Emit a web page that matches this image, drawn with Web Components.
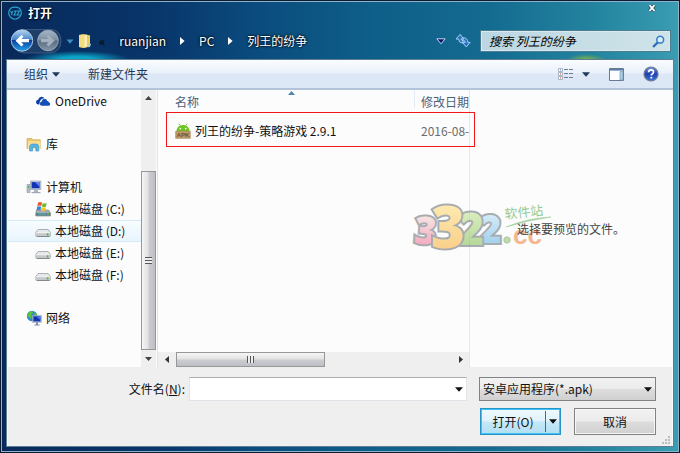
<!DOCTYPE html>
<html lang="zh-CN">
<head>
<meta charset="utf-8">
<title>打开</title>
<style>
    body {
        margin: 0;
        font: 12px/16px "Noto Sans CJK SC", "Open Sans", sans-serif;
        color: #111;
    }
</style>
</head>
<body>

<open-dialog>
    <title-bar slot="title">打开</title-bar>
    <address-bar slot="address" search="搜索 列王的纷争"></address-bar>
    <tool-bar slot="tools"></tool-bar>
    <nav-pane slot="nav">
        <nav-item icon="onedrive" level="2">OneDrive</nav-item>
        <nav-item icon="library" root>库</nav-item>
        <nav-item icon="computer" root>计算机</nav-item>
        <nav-item icon="system" level="2">本地磁盘 (C:)</nav-item>
        <nav-item icon="drive" level="2" hot>本地磁盘 (D:)</nav-item>
        <nav-item icon="drive" level="2">本地磁盘 (E:)</nav-item>
        <nav-item icon="drive" level="2">本地磁盘 (F:)</nav-item>
        <nav-item icon="network" root>网络</nav-item>
    </nav-pane>
    <file-list slot="files"></file-list>
    <preview-pane slot="preview">选择要预览的文件。</preview-pane>
    <dialog-footer slot="footer"></dialog-footer>
</open-dialog>

<script>

const icons = {
    app: `<svg width="14" height="14" viewBox="0 0 14 14" fill="none" stroke="#2aa5cf" stroke-width="1.1">
            <path d="M3 2Q7 .2 11 2Q13.6 4 13.2 8Q12 12.5 7 13.2Q2 12.5 .8 8Q.4 4 3 2Z"/>
            <path d="M2.5 5l1.3 2L5 5M3.8 7v2.3M5.8 5h2.4L6 9h2.3M9 5h2.4L9.2 9h2.6"/></svg>`,
    close: `<svg width="8" height="8" viewBox="0 0 8 8"><path d="M1.5 1.2l5 5.6M6.5 1.2l-5 5.6" stroke="#26394a" stroke-width="3.2"/>
            <path d="M1.5 1.2l5 5.6M6.5 1.2l-5 5.6" stroke="#fff" stroke-width="1.8"/></svg>`,
    travel: `<svg width="54" height="26" viewBox="0 0 54 26">
            <defs>
                <linearGradient id="b" x2="0" y2="1"><stop stop-color="#b9d6ef"/><stop offset=".46" stop-color="#4585ca"/><stop offset=".5" stop-color="#0b3f9c"/><stop offset="1" stop-color="#25a5ee"/></linearGradient>
                <linearGradient id="g" x2="0" y2="1"><stop stop-color="#a7b6c6"/><stop offset=".48" stop-color="#7d8fa3"/><stop offset=".52" stop-color="#596c82"/><stop offset="1" stop-color="#8696a8"/></linearGradient>
            </defs>
            <path d="M12 1.5H42Q51 3 51 13Q51 24 40 25H14Q3 24 2 13" fill="#27476f" stroke="#5f7896" stroke-width=".8" opacity=".7"/>
            <circle cx="12" cy="12.5" r="10.7" fill="url(#b)" stroke="#aac6e2"/>
            <circle cx="38" cy="12.5" r="10.3" fill="url(#g)" stroke="#93a5b9"/>
            <path d="M5.5 12.7l6-5.8 2 1.9-2.2 2.3H19v3.2h-7.7l2.2 2.3-2 1.9z" fill="#fff"/>
            <path d="M44.5 12.7l-6-5.8-2 1.9 2.2 2.3H31v3.2h7.7l-2.2 2.3 2 1.9z" fill="#a3b0bd"/></svg>`,
    downBlue: `<svg width="8" height="5" viewBox="0 0 8 5"><path d="M.5.5h7L4 4.7z" fill="#3b8fc6"/></svg>`,
    folder: `<svg width="14" height="16" viewBox="0 0 14 16">
            <path d="M1 2l6-1 1 1 4 .2v11L7 15 1 14z" fill="#dfb84b"/>
            <path d="M1 2l5-.8V15l-5-.9z" fill="#f3dc83"/><path d="M6.2 2.2l3-.9v12l-3 1.5z" fill="#fff0b0"/>
            <path d="M9.4 2.8H12v10.8l-2.6.6z" fill="#eecb63"/><path d="M11 10l2 1-1 3-2 .3z" fill="#9fcbd8"/></svg>`,
    crumb: `<svg width="5" height="8" viewBox="0 0 5 8"><path d="M0 0l4.6 4L0 8z" fill="#fff"/></svg>`,
    history: `<svg width="10" height="7" viewBox="0 0 10 7"><path d="M.8.8h8.4L5 5.8z" fill="#10106e" stroke="#c3d5ec"/></svg>`,
    refresh: `<svg width="16" height="16" viewBox="0 0 16 16" fill="#2874c4" stroke="#b3d6f2" stroke-width=".9">
            <path d="M5.2 1.3L1 6h2.5q.2 4 4.2 4.2l.4-2.5Q6.2 7.6 6 6h2.5z"/>
            <path d="M11.3 14l3.8-4.6h-2.3Q12.7 5 8.3 4.7L8 7q2.2.5 2.3 2.4H7.5z"/></svg>`,
    search: `<svg width="13" height="13" viewBox="0 0 13 13" fill="none">
            <path d="M6 7.2L1.7 11.3" stroke="#2f6fbd" stroke-width="2.3" stroke-linecap="round"/>
            <circle cx="8.2" cy="4.7" r="3.4" fill="#d9edf6" stroke="#377bcb" stroke-width="1.5"/></svg>`,
    down: `<svg width="8" height="5" viewBox="0 0 8 5"><path d="M0 .3h8L4 4.8z" fill="currentColor"/></svg>`,
    up: `<svg width="7" height="4" viewBox="0 0 7 4"><path d="M0 4h7L3.5 0z" fill="#444"/></svg>`,
    smallDown: `<svg width="7" height="4" viewBox="0 0 7 4"><path d="M0 0h7L3.5 4z" fill="#444"/></svg>`,
    left: `<svg width="4" height="7" viewBox="0 0 4 7"><path d="M4 0v7L0 3.5z" fill="#333"/></svg>`,
    right: `<svg width="4" height="7" viewBox="0 0 4 7"><path d="M0 0v7l4-3.5z" fill="#333"/></svg>`,
    sort: `<svg width="7" height="4" viewBox="0 0 7 4"><path d="M0 4h7L3.5 0z" fill="#4b87ab"/></svg>`,
    view: `<svg width="15" height="12" viewBox="0 0 15 12">
            <path d="M.5.5h4v3h-4zM.5 4.5h4v3h-4zM.5 8.5h4v3h-4z" fill="#fff" stroke="#9aa7b8" stroke-width=".8"/>
            <path d="M2 1.5h1v1H2z" fill="#3b78c4"/><path d="M2 5.5h1v1H2zM2 9.5h1v1H2z" fill="#c94f35"/>
            <path d="M6 1.5h4M11 1.5h4M6 5.5h4M11 5.5h4M6 9.5h4M11 9.5h4" stroke="#6c7c92"/></svg>`,
    pane: `<svg width="15" height="13" viewBox="0 0 15 13"><path d="M.5.5h14v12H.5z" fill="#fff" stroke="#6a7a8e"/>
            <path d="M1 1h13v1.6H1z" fill="#5d7fae"/><path d="M11 3.5h3V12h-3z" fill="#aecbe2" stroke="#6a93b2" stroke-width=".6"/></svg>`,
    help: `<svg width="16" height="16" viewBox="0 0 16 16">
            <defs><linearGradient id="h" x2="0" y2="1"><stop stop-color="#7895dc"/><stop offset=".5" stop-color="#1e40ae"/><stop offset="1" stop-color="#3c78dc"/></linearGradient></defs>
            <circle cx="8" cy="8" r="7" fill="url(#h)" stroke="#6f7b8f" stroke-width="1.2"/>
            <path d="M5.6 6.3Q5.7 3.9 8.1 3.9q2.4.1 2.4 2.1 0 1.2-1.3 2-.9.6-.9 1.5" fill="none" stroke="#fff" stroke-width="1.7"/>
            <path d="M7.4 10.8h1.8v1.7H7.4z" fill="#fff"/></svg>`,
    onedrive: `<svg width="16" height="16" viewBox="0 0 16 16">
            <path d="M4.3 11.5H3Q.7 11 1 8.8 1.4 7 3.2 6.8 3.6 4 6.3 3.7q2-.2 3.2 1.6-4.6-.4-5.2 6.2z" fill="#0c3fa5"/>
            <path d="M6.5 12.8Q4.7 12.4 4.8 10.5 5 8.8 6.7 8.5 7 5.9 9.4 5.8q2.3.1 2.8 2.2 1.7.1 1.8 1.5 1.3.4 1.2 1.7-.1 1.4-1.5 1.6z" fill="#1450b8"/></svg>`,
    library: `<svg width="16" height="16" viewBox="0 0 16 16">
            <path d="M1 2.5h5l1 1.3h7.3v8.7H1z" fill="#eac766" stroke="#c8a147" stroke-width=".6"/>
            <path d="M2 5.3h12.5V13H2z" fill="#fbe7a1"/><path d="M2 7h12.5" stroke="#e6c977" stroke-width=".6"/>
            <path d="M3.6 15V10.4Q4 8.2 6 8.1h4.6q2 .2 2.2 2.3V15h-3v-3.6H6.6V15z" fill="#56b5e5" stroke="#3a8dbd" stroke-width=".6"/></svg>`,
    computer: `<svg width="16" height="16" viewBox="0 0 16 16">
            <path d="M1 5.5h3v8H1z" fill="#b7bfc8" stroke="#7c8792" stroke-width=".5"/><path d="M2 7h1v2H2z" fill="#3bb54a"/>
            <path d="M4.5 2h10.3v8.5H4.5z" fill="#c9d3df" stroke="#8490a3" stroke-width=".6"/>
            <path d="M5.6 3.1h8.1v6.2H5.6z" fill="#1432b5"/><path d="M9 3.1h4.7v5z" fill="#5e86ee"/>
            <path d="M8.5 10.7h3l.8 2.3H7.5z" fill="#aab4c0"/><path d="M5.5 13h9v1.2h-9z" fill="#9ea8b4"/></svg>`,
    system: `<svg width="16" height="16" viewBox="0 0 16 16">
            <path d="M1.5 9h12l2 3v3H.8v-3z" fill="#a7adb4" stroke="#727980" stroke-width=".6"/>
            <path d="M1 12h14v2.6H1z" fill="#5b7c83"/><path d="M3 12.5h8v1H3z" fill="#4cb9c9"/><path d="M12.3 12.3h1.5v1.5h-1.5z" fill="#54e03a"/>
            <path d="M3 1.7Q5 .4 7 1.6L6.3 5.1Q4.5 4 2.3 5.2z" fill="#e8542b"/><path d="M7.6 2q2 1 4.1 0L11 5.4q-2.2 1.1-4 0z" fill="#6dba2e"/>
            <path d="M2.2 5.8q2-1.1 4 0L5.5 9.2q-2-1.1-4 0z" fill="#2f86dc"/><path d="M6.8 6.1q2 1 4 0l-.7 3.5q-2 1-4 0z" fill="#f9c327"/></svg>`,
    drive: `<svg width="16" height="16" viewBox="0 0 16 16">
            <path d="M3.2 6.5h10l2 2.8v3.9H.9V9.3z" fill="#e7e8ea" stroke="#8e9297" stroke-width=".7"/>
            <path d="M1.2 9.8h13.7v3.1H1.2z" fill="#c4c7cb"/><path d="M1.2 9.8h13.7" stroke="#f8f8f8" stroke-width=".8"/>
            <path d="M2 13.5h12.5" stroke="#777" stroke-width=".8"/><path d="M11.8 10.3h1.6v2.2h-1.6z" fill="#4bba38"/></svg>`,
    network: `<svg width="16" height="16" viewBox="0 0 16 16">
            <circle cx="6" cy="6" r="5.2" fill="#2a8bd2"/>
            <path d="M2 2.9Q4 .9 6.4.9L7 3 5 4.5l1 2L4.5 9 2.8 6.7.9 6.2Q.9 4.4 2 2.9zM8.3 3l2.4.6q.7 1.7.3 3.6L8.4 6z" fill="#5cc043"/>
            <path d="M6.4 5.4h9v7h-9z" fill="#c9d6e8" stroke="#7a8aa5" stroke-width=".5"/><path d="M7.3 6.2h7.2v5.3H7.3z" fill="#1534b2"/>
            <path d="M10 6.2h4.5v4z" fill="#4c79e2"/><path d="M10 12.5h2v2h1.6v1H8.4v-1H10z" fill="#7f8da0"/></svg>`,
    apk: `<svg width="16" height="16" viewBox="0 0 16 16">
            <path d="M3.8.7l1.6 2M12.2.7l-1.6 2" stroke="#6fae1d" stroke-width=".9"/>
            <path d="M1.5 8.6Q1.8 2 8 2q6.2 0 6.5 6.6z" fill="#6cc51f"/><circle cx="5.3" cy="5.6" r=".9" fill="#fff"/><circle cx="10.7" cy="5.6" r=".9" fill="#fff"/>
            <path d="M.7 8.3h14.6v7H.7z" fill="#c39c6b" stroke="#9c7648" stroke-width=".6"/>
            <text x="8" y="14" text-anchor="middle" font-family="Liberation Sans" font-weight="bold" font-size="6" fill="#6f4c26">APK</text></svg>`,
    grip: `<svg width="9" height="9" viewBox="0 0 9 9" fill="#b9bec4"><path d="M6 0h2v2H6zM3 3h2v2H3zM6 3h2v2H6zM0 6h2v2H0zM3 6h2v2H3zM6 6h2v2H6z"/></svg>`
};


class shellIcon extends HTMLElement {
    constructor() {
        super();
        this.attachShadow({ mode: 'open' });
    }

    connectedCallback() {
        this.shadowRoot.innerHTML = `
        <style>
            :host { display: inline-flex; flex: none; }
            svg { display: block; }
        </style>
        ${icons[this.getAttribute('name')]}`;
    }
}
customElements.define('shell-icon', shellIcon);


class openDialog extends HTMLElement {
    constructor() {
        super();
        this.attachShadow({ mode: 'open' });
        this.shadowRoot.innerHTML = `
        <style>
            :host {
                display: grid;
                grid-template-rows: 21px 36px 1fr;
                box-sizing: border-box;
                min-height: 100vh;
                border: 1px solid #0b1d33;
                padding: 1px 5px 5px;
                box-shadow: inset 0 0 0 1px #8fb2c8;
                background:
                    radial-gradient(ellipse 52px 8px at 76px 58px, #0ba5c8 30%, transparent),
                    radial-gradient(ellipse 20px 6px at 585px 59px, #86b83e, transparent),
                    linear-gradient(90deg, #08295a 0%, #08356a 22%, #0b4c7e 38%, #0e5f89 55%, #146b90 72%, #2485a0 88%, #3a9db2 100%);
            }
            .client {
                display: grid;
                grid-template-rows: 30px 1fr 79px;
                border: 1px solid #5f7f97;
                box-shadow: inset 0 0 0 1px #f6f8fa;
                background: #fcfcfc;
                padding: 0 1px;
            }
            .panes {
                display: grid;
                grid-template-columns: 150px 312px 1fr;
                min-height: 0;
            }
        </style>
        <slot name="title"></slot>
        <slot name="address"></slot>
        <div class="client">
            <slot name="tools"></slot>
            <div class="panes">
                <slot name="nav"></slot>
                <slot name="files"></slot>
                <slot name="preview"></slot>
            </div>
            <slot name="footer"></slot>
        </div>
        `;
    }
}
customElements.define('open-dialog', openDialog);


class titleBar extends HTMLElement {
    constructor() {
        super();
        this.attachShadow({ mode: 'open' });
        this.shadowRoot.innerHTML = `
        <style>
            :host {
                display: flex;
                align-items: center;
                gap: 6px;
                padding: 1px 18px 0 2px;
                color: #fff;
                text-shadow: 0 0 2px #000, 0 1px 2px #001;
            }
            h1 { flex: 1; margin: 0; font-size: 12px; font-weight: 700; }
            button { align-self: flex-start; display: flex; border: 0; padding: 1px 0; background: none; }
        </style>
        <shell-icon name="app"></shell-icon>
        <h1><slot></slot></h1>
        <button aria-label="关闭"><shell-icon name="close"></shell-icon></button>
        `;
    }
}
customElements.define('title-bar', titleBar);


class addressBar extends HTMLElement {
    constructor() {
        super();
        this.attachShadow({ mode: 'open' });
        this.shadowRoot.innerHTML = `
        <style>
            :host {
                display: flex;
                align-items: center;
                padding: 0 3px 0 4px;
                color: #fff;
            }
            button {
                display: flex;
                align-items: center;
                border: 0;
                padding: 0;
                background: none;
                color: inherit;
                font: inherit;
                text-shadow: 0 0 2px #000, 0 0 3px #000;
            }
            nav { flex: 1; display: flex; align-items: center; gap: 14px; padding-left: 4px; }
            .recent { padding-left: 2px; }
            .root { gap: 7px; color: #020a14; text-shadow: none; font-weight: 700; }
            .tools { display: flex; gap: 9px; align-items: center; padding-right: 9px; }
            .search {
                display: flex;
                align-items: center;
                box-sizing: border-box;
                width: 191px;
                height: 22px;
                border: 1px solid #4a7f93;
                padding: 0 5px 0 8px;
                background: linear-gradient(90deg, #bcd6e2, #cfe4e9);
                box-shadow: inset 0 0 0 1px #dbe9ef;
            }
            input {
                flex: 1;
                min-width: 0;
                border: 0;
                padding: 0;
                background: none;
                font: inherit;
                font-style: italic;
                outline: 0;
            }
            input::placeholder { color: #000; opacity: 1; }
        </style>
        <button aria-label="后退和前进"><shell-icon name="travel"></shell-icon></button>
        <button class="recent" aria-label="最近的位置"><shell-icon name="downBlue"></shell-icon></button>
        <nav>
            <button class="root"><shell-icon name="folder"></shell-icon>«</button>
            <button>ruanjian</button>
            <shell-icon name="crumb"></shell-icon>
            <button>PC</button>
            <shell-icon name="crumb"></shell-icon>
            <button>列王的纷争</button>
        </nav>
        <div class="tools">
            <button aria-label="以前的位置"><shell-icon name="history"></shell-icon></button>
            <button aria-label="刷新"><shell-icon name="refresh"></shell-icon></button>
        </div>
        <label class="search">
            <input type="text">
            <shell-icon name="search"></shell-icon>
        </label>
        `;
    }

    connectedCallback() {
        let input = this.shadowRoot.querySelector('input');
        input.placeholder = this.getAttribute('search');
        input.setAttribute('aria-label', this.getAttribute('search'));
    }
}
customElements.define('address-bar', addressBar);


class toolBar extends HTMLElement {
    constructor() {
        super();
        this.attachShadow({ mode: 'open' });
        this.shadowRoot.innerHTML = `
        <style>
            :host {
                display: flex;
                align-items: center;
                gap: 28px;
                margin: 0 -1px;
                border-bottom: 2px solid #b3c3d9;
                padding: 0 14px 0 17px;
                background: linear-gradient(#fafcff, #eaf1fa 45%, #dde7f5 50%, #dce7f6);
                color: #1e395b;
            }
            button {
                display: flex;
                align-items: center;
                gap: 4px;
                border: 0;
                padding: 0;
                background: none;
                color: inherit;
                font: inherit;
            }
            .right { margin-left: auto; display: flex; gap: 19px; align-items: center; }
            .view { gap: 9px; }
        </style>
        <button>组织 <shell-icon name="down"></shell-icon></button>
        <button>新建文件夹</button>
        <div class="right">
            <button class="view" aria-label="更改视图"><shell-icon name="view"></shell-icon><shell-icon name="down"></shell-icon></button>
            <button aria-label="显示预览窗格"><shell-icon name="pane"></shell-icon></button>
            <button aria-label="帮助"><shell-icon name="help"></shell-icon></button>
        </div>
        `;
    }
}
customElements.define('tool-bar', toolBar);


// direction="vertical" | "horizontal", before / thumb / after are flex shares of the track
class scrollStrip extends HTMLElement {
    constructor() {
        super();
        this.attachShadow({ mode: 'open' });
    }

    connectedCallback() {
        let vertical = this.getAttribute('direction') == 'vertical';
        this.shadowRoot.innerHTML = `
        <style>
            :host { display: flex; flex-direction: ${vertical ? 'column' : 'row'}; background: #efefef; }
            button {
                flex: none;
                display: flex;
                align-items: center;
                justify-content: center;
                width: ${vertical ? 'auto' : '17px'};
                height: ${vertical ? '16px' : 'auto'};
                border: 0;
                padding: 0;
                background: none;
            }
            .before { flex: ${this.getAttribute('before')}; }
            .after { flex: ${this.getAttribute('after')}; }
            .thumb {
                flex: ${this.getAttribute('thumb')};
                display: flex;
                align-items: center;
                justify-content: center;
                border: 1px solid #979797;
                background: linear-gradient(${vertical ? '90deg' : '180deg'}, #f6f6f6, #e2e2e4 45%, #cbccd0 55%, #bebfc4);
            }
            .ridges {
                width: 7px;
                height: 7px;
                background: repeating-linear-gradient(${vertical ? '180deg' : '90deg'}, #555 0 1px, #eee 1px 3px);
            }
        </style>
        <button aria-label="${vertical ? '向上' : '向左'}"><shell-icon name="${vertical ? 'up' : 'left'}"></shell-icon></button>
        <div class="before"></div>
        <div class="thumb"><div class="ridges"></div></div>
        <div class="after"></div>
        <button aria-label="${vertical ? '向下' : '向右'}"><shell-icon name="${vertical ? 'smallDown' : 'right'}"></shell-icon></button>
        `;
    }
}
customElements.define('scroll-strip', scrollStrip);


class navPane extends HTMLElement {
    constructor() {
        super();
        this.attachShadow({ mode: 'open' });
        this.shadowRoot.innerHTML = `
        <style>
            :host {
                display: grid;
                grid-template-columns: minmax(0, 1fr) 15px;
                border-right: 1px solid #d9e5f3;
                padding-right: 1px;
            }
            nav { display: flex; flex-direction: column; }
        </style>
        <nav><slot></slot></nav>
        <scroll-strip direction="vertical" before="66" thumb="178" after="1"></scroll-strip>
        `;
    }
}
customElements.define('nav-pane', navPane);


class navItem extends HTMLElement {
    constructor() {
        super();
        this.attachShadow({ mode: 'open' });
        this.shadowRoot.innerHTML = `
        <style>
            :host { display: block; }
            :host([root]) { padding-top: 21px; }
            a {
                display: flex;
                align-items: center;
                gap: 4px;
                box-sizing: border-box;
                height: 22px;
                border: solid transparent;
                border-width: 1px 0;
                padding-left: 18px;
                color: inherit;
                text-decoration: none;
                white-space: nowrap;
            }
            :host([level="2"]) a { padding-left: 27px; }
            :host([hot]) a { border-color: #d5ebf8; background: linear-gradient(#f7fcff, #e8f5fd); }
        </style>
        <a href="#"><shell-icon name="${this.getAttribute('icon')}"></shell-icon><slot></slot></a>
        `;
    }
}
customElements.define('nav-item', navItem);


class fileList extends HTMLElement {
    constructor() {
        super();
        this.attachShadow({ mode: 'open' });
        this.shadowRoot.innerHTML = `
        <style>
            :host {
                display: grid;
                grid-template-rows: 1fr 15px;
                border-right: 1px solid #dfe8f5;
                position: relative;
            }
            .view { overflow: hidden; position: relative; }
            table { table-layout: fixed; width: 360px; border-collapse: collapse; }
            .name { width: 257px; }
            th, td { padding: 0; text-align: left; font-weight: 400; white-space: nowrap; }
            th { height: 24px; color: #4c607a; }
            th:first-child { padding-left: 17px; background: linear-gradient(#e3ebf5, #e3ebf5) right top / 1px 18px no-repeat; }
            th + th, td + td { padding-left: 6px; }
            td { height: 34px; }
            td:first-child { padding-left: 17px; }
            td + td { color: #6d6d6d; }
            .file { display: flex; align-items: center; gap: 4px; }
            .sort { position: absolute; left: 130px; top: 1px; }
            /* red outline around the file that has to be picked */
            .callout {
                position: absolute;
                left: 8px;
                right: -6px;
                top: 22px;
                height: 33px;
                border: 1px solid #f01818;
                z-index: 1;
                pointer-events: none;
            }
        </style>
        <div class="view">
            <table>
                <colgroup><col class="name"><col></colgroup>
                <thead><tr><th>名称</th><th>修改日期</th></tr></thead>
                <tbody><tr>
                    <td><span class="file"><shell-icon name="apk"></shell-icon>列王的纷争-策略游戏 2.9.1</span></td>
                    <td>2016-08-</td>
                </tr></tbody>
            </table>
            <shell-icon class="sort" name="sort"></shell-icon>
        </div>
        <scroll-strip direction="horizontal" before="1" thumb="148" after="128"></scroll-strip>
        <div class="callout"></div>
        `;
    }
}
customElements.define('file-list', fileList);


class siteMark extends HTMLElement {
    constructor() {
        super();
        this.attachShadow({ mode: 'open' });
        this.shadowRoot.innerHTML = `
        <style>
            :host { display: block; opacity: .6; }
            svg { display: block; overflow: visible; }
            .digits { font-family: "Open Sans", sans-serif; font-weight: 800; paint-order: stroke; stroke: #73787c; stroke-width: 4px; stroke-linejoin: miter; }
        </style>
        <svg width="150" height="60" viewBox="0 0 150 60">
            <defs>
                <linearGradient id="r" x2="0" y2="1"><stop offset=".2" stop-color="#f2ded8"/><stop offset="1" stop-color="#ee5487"/></linearGradient>
                <linearGradient id="y" x2="0" y2="1"><stop offset=".2" stop-color="#ffe183"/><stop offset="1" stop-color="#f6a428"/></linearGradient>
                <linearGradient id="n" x2="0" y2="1"><stop offset=".2" stop-color="#c9e59a"/><stop offset="1" stop-color="#6fb443"/></linearGradient>
                <linearGradient id="u" x2="0" y2="1"><stop offset=".2" stop-color="#bde5f7"/><stop offset="1" stop-color="#4fa6dd"/></linearGradient>
            </defs>
            <g class="digits">
                <text x="10" y="48" font-size="38" fill="url(#r)" transform="rotate(4 20 40)">3</text>
                <text x="75" y="47" font-size="38" fill="url(#u)">2</text>
                <text x="54" y="49" font-size="44" fill="url(#n)">2</text>
                <text x="27" y="52" font-size="58" fill="url(#y)">3</text>
            </g>
            <circle cx="103" cy="44" r="3.2" fill="#8ecb62" stroke="#8b9b80"/>
            <text x="109" y="48" font-family="Liberation Sans" font-weight="bold" font-size="26" fill="#f38a48">cc</text>
            <text x="101" y="23" font-size="13" fill="#4faa4d" transform="rotate(-6 101 23)">软件站</text>
            <path d="M102 31Q124 22 147 21Q125 24 102 31z" fill="#62b45f" stroke="#62b45f" stroke-width=".6"/>
        </svg>
        `;
    }
}
customElements.define('site-mark', siteMark);


class previewPane extends HTMLElement {
    constructor() {
        super();
        this.attachShadow({ mode: 'open' });
        this.shadowRoot.innerHTML = `
        <style>
            :host {
                display: flex;
                align-items: center;
                justify-content: center;
                position: relative;
                color: #444;
            }
            /* watermark hangs over the divider into the file list */
            site-mark { position: absolute; left: -66px; top: 106px; }
            p { margin: 0; position: relative; }
        </style>
        <site-mark></site-mark>
        <p><slot></slot></p>
        `;
    }
}
customElements.define('preview-pane', previewPane);


class dialogFooter extends HTMLElement {
    constructor() {
        super();
        this.attachShadow({ mode: 'open' });
        this.shadowRoot.innerHTML = `
        <style>
            :host {
                display: grid;
                grid-template-columns: 177px 1fr 177px;
                grid-template-rows: 24px 27px;
                gap: 7px 0;
                padding: 10px 16px 0 0;
                background: #efefef;
                position: relative;
            }
            .label { align-self: center; justify-self: end; }
            .combo {
                display: flex;
                margin: 0 12px 0 4px;
                border: 1px solid #e0e3e8;
                border-top-color: #abadb3;
                background: #fff;
            }
            input { flex: 1; min-width: 0; border: 0; padding: 0 4px; background: none; font: inherit; outline: 0; }
            button, select { font: inherit; color: #111; padding: 0; margin: 0; }
            .drop { border: 0; width: 15px; display: flex; align-items: center; justify-content: center; background: none; }
            .type { display: grid; align-items: center; }
            .type > * { grid-area: 1 / 1; }
            .type shell-icon { justify-self: end; padding-right: 4px; pointer-events: none; }
            select {
                appearance: none;
                width: 100%;
                height: 24px;
                border: 1px solid #828282;
                border-radius: 0;
                padding-left: 3px;
                background: linear-gradient(#f2f2f2, #ebebeb 48%, #dddddd 52%, #d0d0d0);
            }
            .actions { grid-column: 3; display: grid; grid-template-columns: 81px 82px; gap: 13px; justify-content: end; }
            .open {
                display: grid;
                grid-template-columns: 1fr 15px;
                border: 1px solid #2793c8;
                box-shadow: inset 0 0 0 1px #3dc3f3;
                background: linear-gradient(#eff9fe, #dff2fb 48%, #c4e8f8 52%, #b2dff4);
            }
            .open button { border: 0; background: none; display: flex; align-items: center; justify-content: center; }
            .open .more { border-left: 1px solid #4d6a78; margin: 2px 0; }
            .cancel {
                border: 1px solid #828282;
                box-shadow: inset 0 0 0 1px #f7f7f7;
                background: linear-gradient(#f2f2f2, #ebebeb 48%, #dddddd 52%, #d0d0d0);
            }
            .grip { position: absolute; right: 1px; bottom: 1px; }
        </style>
        <label class="label" for="file">文件名(<u>N</u>):</label>
        <div class="combo">
            <input id="file" type="text">
            <button class="drop" aria-label="文件名列表"><shell-icon name="down"></shell-icon></button>
        </div>
        <div class="type">
            <select aria-label="文件类型"><option>安卓应用程序(*.apk)</option></select>
            <shell-icon name="down"></shell-icon>
        </div>
        <div class="actions">
            <div class="open">
                <button>打开(O)</button>
                <button class="more" aria-label="打开方式"><shell-icon name="down"></shell-icon></button>
            </div>
            <button class="cancel">取消</button>
        </div>
        <shell-icon class="grip" name="grip"></shell-icon>
        `;
    }
}
customElements.define('dialog-footer', dialogFooter);

</script>
</body>
</html>
